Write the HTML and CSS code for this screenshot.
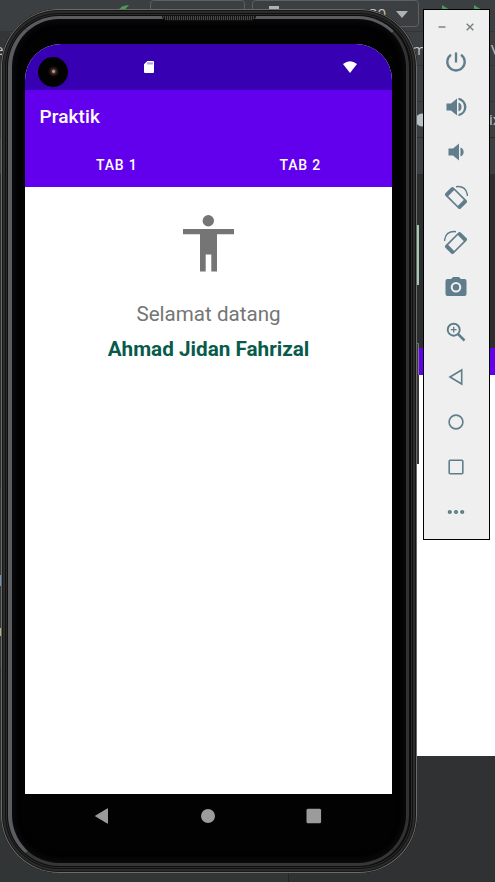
FILE: index.html
```html
<!DOCTYPE html>
<html lang="id">
<head>
<meta charset="utf-8">
<title>Praktik</title>
<link rel="stylesheet" href="styles.css">
</head>
<body>
<div class="desktop">
  <svg class="backdrop" width="495" height="882" viewBox="0 0 495 882">
    <rect width="495" height="882" fill="#2b2d2e"/>
    <rect width="495" height="174" fill="#3c3f41"/>
    <path d="M0 31.5H495M410 65.5H495M410 101.5H495" stroke="#323537"/>
    <path d="M410 137.5H495" stroke="#292b2c"/>
    <rect y="31" width="10" height="107" fill="#343536"/>
    <path d="M118 11Q121 5 129 5L122 13Z" fill="#499c54"/>
    <rect x="150.500" y="0.500" width="94" height="24" rx="3" fill="none" stroke="#5e6162"/>
    <rect x="252.500" y="0.500" width="166" height="26" rx="3" fill="none" stroke="#5e6162"/>
    <rect x="269" y="6" width="10" height="8" fill="#b0b3b5"/>
    <text x="359" y="19" class="ide-text">r 30</text>
    <path d="M396 11H408L402 18Z" fill="#afb1b3"/>
    <path d="M442 5L450 10H442ZM474 5L482 10H474Z" fill="#499c54"/>
    <text x="412" y="55" class="ide-text">m</text>
    <text x="-5" y="55" class="ide-text">e</text>
    <text x="491" y="55" class="ide-text">V</text>
    <circle cx="422" cy="120" r="6.500" fill="#b8c0c8"/>
    <text x="489" y="125" class="ide-text">ix</text>
    <rect x="414" y="348" width="81" height="27" fill="#6200ee"/>
    <rect x="414" y="375" width="81" height="381" fill="#fff"/>
    <rect x="414" y="756" width="81" height="126" fill="#2f3132"/>
    <rect y="800" width="288" height="82" fill="#313536"/>
    <rect x="288" y="800" width="130" height="82" fill="#2f3132"/>
    <path d="M288.500 872V882" stroke="#242627"/>
    <rect y="487" width="3" height="180" fill="#333536"/>
    <rect y="575" width="3" height="11" fill="#6f8fb0"/>
    <rect y="628" width="3" height="8" fill="#b7ae79"/>
    <rect x="415" y="225" width="4" height="60" fill="#a3c7b5"/>
    <rect x="415" y="343" width="4" height="121" fill="#393939"/>
    <path d="M415 343.500H418.500V375" stroke="#777" fill="none"/>
  </svg>

  <main class="phone">
    <div class="speaker"></div>
    <div class="screen">
      <header class="status">
        <span class="camera"></span>
        <svg class="sd" width="10" height="12" viewBox="0 0 10 12"><path d="M3.300 0H9Q10 0 10 1V11Q10 12 9 12H1Q0 12 0 11V3.300Z" fill="#fff"/><path d="M4 1.300V3.500M6 1.300V3.500M8 1.300V3.500" stroke="#6f4fc0"/></svg>
        <svg class="wifi" width="14" height="12" viewBox="0 0 14 12"><path d="M0 3Q7-2.600 14 3L7 12Z" fill="#fff"/></svg>
      </header>
      <h1 class="title">Praktik</h1>
      <nav class="tabs"><span>TAB 1</span><span>TAB 2</span></nav>
      <section class="content">
        <svg class="person" width="51" height="57" viewBox="0 0 51 57" fill="#757575"><circle cx="25.300" cy="5.700" r="5.700"/><path d="M0 14H51V19.300H34V56.500H28.300V39.500H22.700V56.500H17V19.300H0Z"/></svg>
        <p class="welcome">Selamat datang</p>
        <p class="name">Ahmad Jidan Fahrizal</p>
      </section>
    </div>
    <footer class="navbar">
      <svg width="16" height="16" viewBox="0 0 16 16"><path d="M1.500 8L13.500 .8V15.200Z" fill="#9b9b9b" stroke="#9b9b9b" stroke-linejoin="round"/></svg>
      <svg width="16" height="16" viewBox="0 0 16 16"><circle cx="8" cy="8" r="7" fill="#9b9b9b"/></svg>
      <svg width="16" height="16" viewBox="0 0 16 16"><rect x=".5" y=".7" width="14.600" height="14.600" rx="1.500" fill="#9b9b9b"/></svg>
    </footer>
  </main>

  <aside class="toolbar">
    <div class="window-buttons">
      <svg width="8" height="8" viewBox="0 0 8 8"><path d="M.5 4H7.500"/></svg>
      <svg width="8" height="8" viewBox="0 0 8 8"><path d="M.7 .7L7.300 7.300M7.300 .7L.7 7.300"/></svg>
    </div>
    <svg class="tool" viewBox="0 0 24 24"><path d="M12 2.500V12.500M7 4.700A8.700 8.700 0 1 0 17 4.700" stroke-width="2.300"/></svg>
    <svg class="tool solid" viewBox="0 0 24 24"><path d="M2.500 8.500V15.500H7L13 20.500V3.500L7 8.500ZM17.500 12A4.500 4.500 0 0 0 14.500 7.500V16.500A4.500 4.500 0 0 0 17.500 12ZM14.500 2.800V5A7.200 7.200 0 0 1 14.500 19V21.200A9.300 9.300 0 0 0 14.500 2.800Z"/></svg>
    <svg class="tool solid" viewBox="0 0 24 24"><path d="M4.500 8.500V15.500H9L15 20.500V3.500L9 8.500ZM16.500 7.500V16.500A4.800 4.800 0 0 0 16.500 7.500Z"/></svg>
    <svg class="tool" viewBox="0 0 24 24"><g transform="rotate(-45 12 13)"><rect x="7" y="3" width="10" height="20" rx="1.200" stroke-width="1.700"/><path d="M7 4.500H17M7 21.500H17" stroke-width="3.300"/></g><path d="M12 1.700Q22.500 .5 23.500 11" stroke-width="1.500"/></svg>
    <svg class="tool" viewBox="0 0 24 24"><g transform="rotate(45 12 13)"><rect x="7" y="3" width="10" height="20" rx="1.200" stroke-width="1.700"/><path d="M7 4.500H17M7 21.500H17" stroke-width="3.300"/></g><path d="M12 1.700Q1.500 .5 .5 11" stroke-width="1.500"/></svg>
    <svg class="tool solid" viewBox="0 0 24 24"><path fill-rule="evenodd" d="M9 2L7.170 4H3.500Q1.500 4 1.500 6V19Q1.500 21 3.500 21H20.500Q22.500 21 22.500 19V6Q22.500 4 20.500 4H16.830L15 2ZM12 7A5.300 5.300 0 1 1 12 17.600A5.300 5.300 0 1 1 12 7Z"/><circle cx="12" cy="12.300" r="3.200"/></svg>
    <svg class="tool" viewBox="0 0 24 24"><circle cx="9.700" cy="9.700" r="6" stroke-width="1.900"/><path d="M14 14L20.500 20.500" stroke-width="2.500"/><path d="M6.800 9.700H12.600M9.700 6.800V12.600" stroke-width="1.300"/></svg>
    <svg class="tool" viewBox="0 0 24 24"><path d="M6 12L17.700 5V19Z" stroke-width="1.600"/></svg>
    <svg class="tool" viewBox="0 0 24 24"><circle cx="12" cy="12" r="6.900" stroke-width="1.600"/></svg>
    <svg class="tool" viewBox="0 0 24 24"><rect x="5.200" y="5.200" width="13.600" height="13.600" rx="1" stroke-width="1.600"/></svg>
    <svg class="tool solid" viewBox="0 0 24 24"><circle cx="5.800" cy="12" r="2.100"/><circle cx="12" cy="12" r="2.100"/><circle cx="18.200" cy="12" r="2.100"/></svg>
  </aside>
</div>
</body>
</html>
```
FILE: styles.css
```css
* { box-sizing: border-box; }
body { margin: 0; font-family: Roboto, sans-serif; }
h1, p { margin: 0; }
svg { display: block; flex: none; }

.desktop {
  position: relative;
  display: flex;
  align-items: flex-start;
  width: 495px;
  height: 882px;
  padding: 9px 0 0 1px;
  overflow: hidden;
}
.backdrop { position: absolute; inset: 0; }
.ide-text { font: 15px "Open Sans", sans-serif; fill: #c3c5c7; }

.phone {
  position: relative;
  display: flex;
  flex-direction: column;
  width: 416px;
  height: 864px;
  padding: 35px 25px 0 24px;
  border-radius: 58px;
  background: #020203;
  box-shadow:
    inset 0 0 0 1px #6a6a67,
    inset 0 0 0 2px #171717,
    inset 0 0 0 4px #2c2c2c,
    inset 0 0 0 5px #111,
    inset 0 0 0 6px #2a2a2a,
    inset 0 0 0 8px #0d0d0d,
    inset 0 0 5px 14px #0a0a0c;
}
.phone::before {
  content: "";
  position: absolute;
  inset: 7px 8px 7px 7px;
  border: solid;
  border-width: 3px 3px 3px 4px;
  border-color: #5b5c5e #323233 #363637 #5b5c60;
  border-radius: 51px;
}
.speaker {
  position: absolute;
  top: 6px;
  left: 161px;
  width: 94px;
  height: 6px;
  border: 1px solid #111;
  border-radius: 0 0 5px 5px;
  background: repeating-linear-gradient(90deg, #484848 0 1px, #181818 1px 2px);
}
.screen {
  width: 367px;
  height: 750px;
  border-radius: 36px 36px 0 0;
  overflow: hidden;
  background: #fff;
}
.status {
  display: flex;
  align-items: center;
  height: 46px;
  padding: 0 35px 0 13px;
  background: #3700b3;
}
.camera {
  width: 30px;
  height: 30px;
  margin-top: 10px;
  border-radius: 50%;
  background: radial-gradient(circle at 52% 48%, #bd9788 0 1px, #4d3630 2px, #17100f 4px, #020202 6px);
}
.sd { margin-left: 76px; }
.wifi { margin-left: auto; margin-bottom: 1px; }
.title {
  height: 53px;
  padding-left: 14.500px;
  background: #6200ee;
  color: #fff;
  font-size: 19px;
  font-weight: 500;
  letter-spacing: .1px;
  line-height: 54px;
}
.tabs {
  display: grid;
  grid-template-columns: 1fr 1fr;
  height: 44px;
  background: #6200ee;
  color: #fff;
  font-size: 14px;
  font-weight: 500;
  letter-spacing: .8px;
  line-height: 45px;
  text-align: center;
}
.content {
  display: flex;
  flex-direction: column;
  align-items: center;
  padding-top: 28px;
}
.welcome { margin-top: 28px; color: #757575; font-size: 20.600px; line-height: 28px; }
.name { margin-top: 7px; color: #075b4b; font-size: 20.700px; font-weight: 700; line-height: 28px; }
.navbar {
  display: flex;
  justify-content: space-between;
  padding: 14px 70px 0 69px;
}

.toolbar {
  position: relative;
  display: flex;
  flex-direction: column;
  align-items: center;
  width: 67px;
  height: 531px;
  padding-right: 1px;
  margin-left: 6px;
  border: 1px solid #000;
  background: #efefef;
}
.window-buttons {
  display: flex;
  flex: none;
  gap: 20px;
  height: 40px;
  padding-top: 13px;
  stroke: #777d80;
  stroke-width: 1.400;
}
.tool {
  width: 24px;
  height: 24px;
  margin-bottom: 21px;
  fill: none;
  stroke: #5f7d8b;
}
.tool.solid { fill: #5f7d8b; stroke: none; }
```
